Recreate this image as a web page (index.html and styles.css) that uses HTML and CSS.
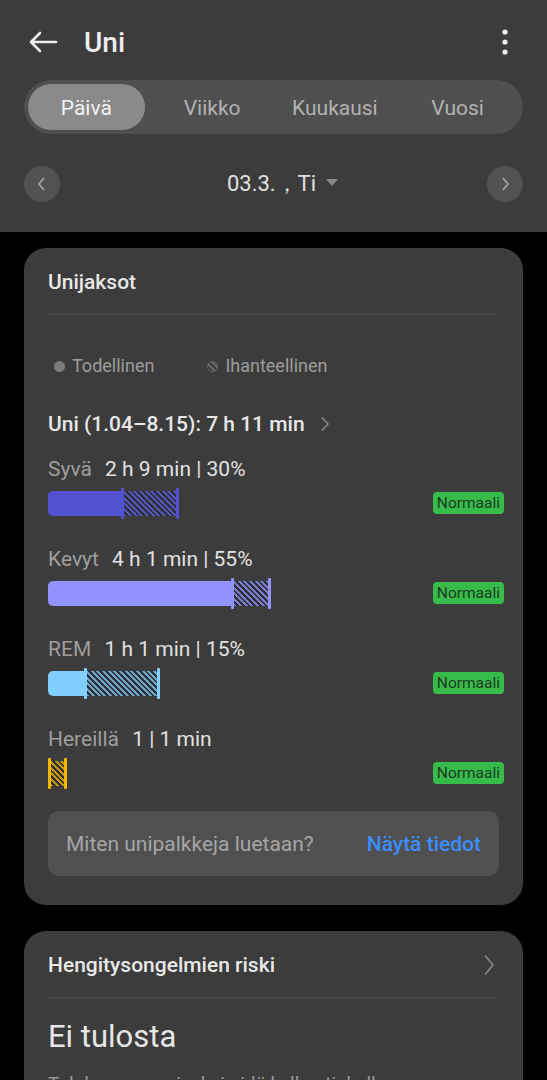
FILE: index.html
```html
<!DOCTYPE html>
<html lang="fi">
<head>
  <meta charset="UTF-8">
  <title>Uni</title>
  <meta name="viewport" content="width=device-width, initial-scale=1.0">
  <link rel="stylesheet" href="styles.css">
</head>
<body>
  <div class="header">
    <div class="topbar">
      <svg class="back" width="30" height="22" viewBox="0 0 30 22"><path d="M28 11H3M12 2L3 11l9 9" fill="none" stroke="#eee" stroke-width="2.6" stroke-linecap="round" stroke-linejoin="round"/></svg>
      <div class="title">Uni</div>
      <svg class="more" width="8" height="26" viewBox="0 0 8 26"><circle cx="4" cy="3" r="2.6" fill="#eee"/><circle cx="4" cy="13" r="2.6" fill="#eee"/><circle cx="4" cy="23" r="2.6" fill="#eee"/></svg>
    </div>
    <div class="tabs">
      <div class="tab active">Päivä</div>
      <div class="tab">Viikko</div>
      <div class="tab">Kuukausi</div>
      <div class="tab">Vuosi</div>
    </div>
    <div class="date-row">
      <div class="circle-btn"><svg width="10" height="14" viewBox="0 0 10 14"><path d="M7 1L2 7l5 6" fill="none" stroke="#aaa" stroke-width="1.6"/></svg></div>
      <div class="date">03.3.，Ti <span class="caret"></span></div>
      <div class="circle-btn"><svg width="10" height="14" viewBox="0 0 10 14"><path d="M3 1l5 6-5 6" fill="none" stroke="#aaa" stroke-width="1.6"/></svg></div>
    </div>
  </div>

  <div class="card">
    <div class="card-title">Unijaksot</div>
    <div class="legend">
      <span class="leg"><i class="dot"></i>Todellinen</span>
      <span class="leg"><i class="dot hatch-dot"></i>Ihanteellinen</span>
    </div>
    <div class="total">Uni (1.04–8.15): 7 h 11 min
      <svg width="10" height="16" viewBox="0 0 10 16"><path d="M2 1.5l6 6.5-6 6.5" fill="none" stroke="#888" stroke-width="1.6"/></svg>
    </div>

    <div class="stage deep">
      <div class="stage-label">Syvä <b>2 h 9 min | 30%</b></div>
      <div class="stage-row">
        <div class="bar">
          <span class="fill" style="width:73px"></span><span class="tick"></span><span class="ideal" style="width:52px"></span><span class="tick"></span>
        </div>
        <span class="badge">Normaali</span>
      </div>
    </div>

    <div class="stage light">
      <div class="stage-label">Kevyt <b>4 h 1 min | 55%</b></div>
      <div class="stage-row">
        <div class="bar">
          <span class="fill" style="width:183px"></span><span class="tick"></span><span class="ideal" style="width:34px"></span><span class="tick"></span>
        </div>
        <span class="badge">Normaali</span>
      </div>
    </div>

    <div class="stage rem">
      <div class="stage-label">REM <b>1 h 1 min | 15%</b></div>
      <div class="stage-row">
        <div class="bar">
          <span class="fill" style="width:36px"></span><span class="tick"></span><span class="ideal" style="width:70px"></span><span class="tick"></span>
        </div>
        <span class="badge">Normaali</span>
      </div>
    </div>

    <div class="stage awake">
      <div class="stage-label">Hereillä <b>1 | 1 min</b></div>
      <div class="stage-row">
        <div class="bar">
          <span class="tick"></span><span class="ideal" style="width:13px"></span><span class="tick"></span>
        </div>
        <span class="badge">Normaali</span>
      </div>
    </div>

    <div class="info-box">
      <span>Miten unipalkkeja luetaan?</span>
      <span class="link">Näytä tiedot</span>
    </div>
  </div>

  <div class="card">
    <div class="card-title with-arrow">Hengitysongelmien riski
      <svg width="12" height="22" viewBox="0 0 12 22"><path d="M2 1.5l8 9.5-8 9.5" fill="none" stroke="#888" stroke-width="1.6"/></svg>
    </div>
    <div class="no-result">Ei tulosta</div>
    <div class="hint">Tuloksen saamiseksi pidä kelloa tiukalla ennen nukkumaanmenoa.</div>
  </div>
</body>
</html>
```

FILE: styles.css
```css
body {
  margin: 0;
  background: #000;
  font-family: Roboto, "Noto Sans", Arial, sans-serif;
  color: #e6e6e6;
  width: 547px;
  height: 1080px;
  overflow: hidden;
}
.header {
  background: #3c3c3c;
  padding-bottom: 30px;
}
.topbar {
  height: 80px;
  padding: 4px 38px 0 28px;
  display: flex;
  align-items: center;
  box-sizing: border-box;
}
.back { margin-right: 26px; }
.title {
  font-size: 28px;
  font-weight: 500;
  color: #eee;
  flex: 1;
}
.tabs {
  margin: 0 24px;
  height: 54px;
  padding: 4px;
  box-sizing: border-box;
  background: #4f4f4f;
  border-radius: 27px;
  display: grid;
  grid-template-columns: 1fr 1fr 1fr 1fr;
}
.tab {
  display: flex;
  align-items: center;
  justify-content: center;
  font-size: 21px;
  color: #b3b3b3;
  border-radius: 23px;
  padding-top: 1px;
}
.tab.active {
  background: #8a8a8a;
  color: #f2f2f2;
  margin-right: 6px;
}
.date-row {
  margin-top: 32px;
  padding: 0 24px;
  height: 36px;
  display: flex;
  align-items: center;
  justify-content: space-between;
}
.circle-btn {
  width: 36px;
  height: 36px;
  border-radius: 50%;
  background: #525252;
  display: flex;
  align-items: center;
  justify-content: center;
}
.date {
  font-size: 22px;
  color: #e0e0e0;
  display: flex;
  align-items: center;
  margin-left: 18px;
}
.caret {
  width: 0;
  height: 0;
  border-left: 6px solid transparent;
  border-right: 6px solid transparent;
  border-top: 7px solid #8a8a8a;
  margin-left: 10px;
  margin-bottom: 4px;
}
.card {
  background: #3c3c3c;
  margin: 16px 24px 0;
  border-radius: 22px;
  padding: 0 24px 29px;
}
.card + .card { margin-top: 26px; }
.card-title {
  padding: 22px 0 20px;
  line-height: 24px;
  font-size: 21px;
  font-weight: 500;
  color: #e8e8e8;
  border-bottom: 1px solid #4b4b4b;
  display: flex;
  align-items: center;
  justify-content: space-between;
}
.with-arrow svg { margin-right: 4px; }
.legend {
  margin-top: 39px;
  line-height: 24px;
  display: flex;
  gap: 53px;
  font-size: 18px;
  color: #9c9c9c;
  padding-left: 6px;
}
.leg {
  display: flex;
  align-items: center;
}
.dot {
  width: 11px;
  height: 11px;
  border-radius: 50%;
  background: #7c7c7c;
  margin-right: 7px;
}
.hatch-dot {
  background: repeating-linear-gradient(45deg, #6a6a6a 0 2px, #3c3c3c 2px 4px);
  border: 1px solid #666;
  box-sizing: border-box;
}
.total {
  margin-top: 34px;
  line-height: 24px;
  font-size: 21px;
  font-weight: 500;
  color: #e8e8e8;
  display: flex;
  align-items: center;
  gap: 15px;
}
.stage { margin-top: 21px; }
.stage + .stage { margin-top: 28px; }
.stage-label {
  line-height: 24px;
  font-size: 21px;
  color: #9e9e9e;
}
.stage-label b {
  font-weight: 400;
  color: #e2e2e2;
  margin-left: 8px;
}
.stage-row {
  margin-top: 6px;
  height: 32px;
  display: flex;
  align-items: center;
  justify-content: space-between;
}
.bar {
  display: flex;
  align-items: center;
  height: 32px;
}
.fill {
  height: 25px;
  background: var(--c);
  border-radius: 5px 0 0 5px;
}
.tick {
  width: 3px;
  height: 31px;
  background: var(--c);
  border-radius: 1px;
}
.ideal {
  height: 25px;
  background: repeating-linear-gradient(45deg, var(--h) 0 2px, rgba(40,40,50,0.9) 2px 4px);
  opacity: 0.8;
}
.deep { --c: #5151d2; --h: #5a5ad8; }
.light { --c: #9393ff; --h: #8a8af0; }
.rem { --c: #82cfff; --h: #79bfe8; }
.awake { --c: #f5b800; --h: #e8ae00; }
.badge {
  background: #37bc4c;
  color: #1c3a20;
  font-size: 15.5px;
  line-height: 22px;
  padding: 0 4px;
  border-radius: 4px;
  margin-right: -5px;
}
.info-box {
  margin-top: 22px;
  height: 65px;
  background: #505050;
  border-radius: 10px;
  padding: 0 18px;
  display: flex;
  align-items: center;
  justify-content: space-between;
  font-size: 21px;
  color: #a6a6a6;
}
.link {
  color: #3b8dff;
  font-weight: 500;
  font-size: 21px;
}
.no-result {
  margin-top: 21px;
  font-size: 31px;
  line-height: 36px;
  color: #e6e6e6;
}
.hint {
  margin-top: 17px;
  font-size: 19px;
  color: #9a9a9a;
}
```
